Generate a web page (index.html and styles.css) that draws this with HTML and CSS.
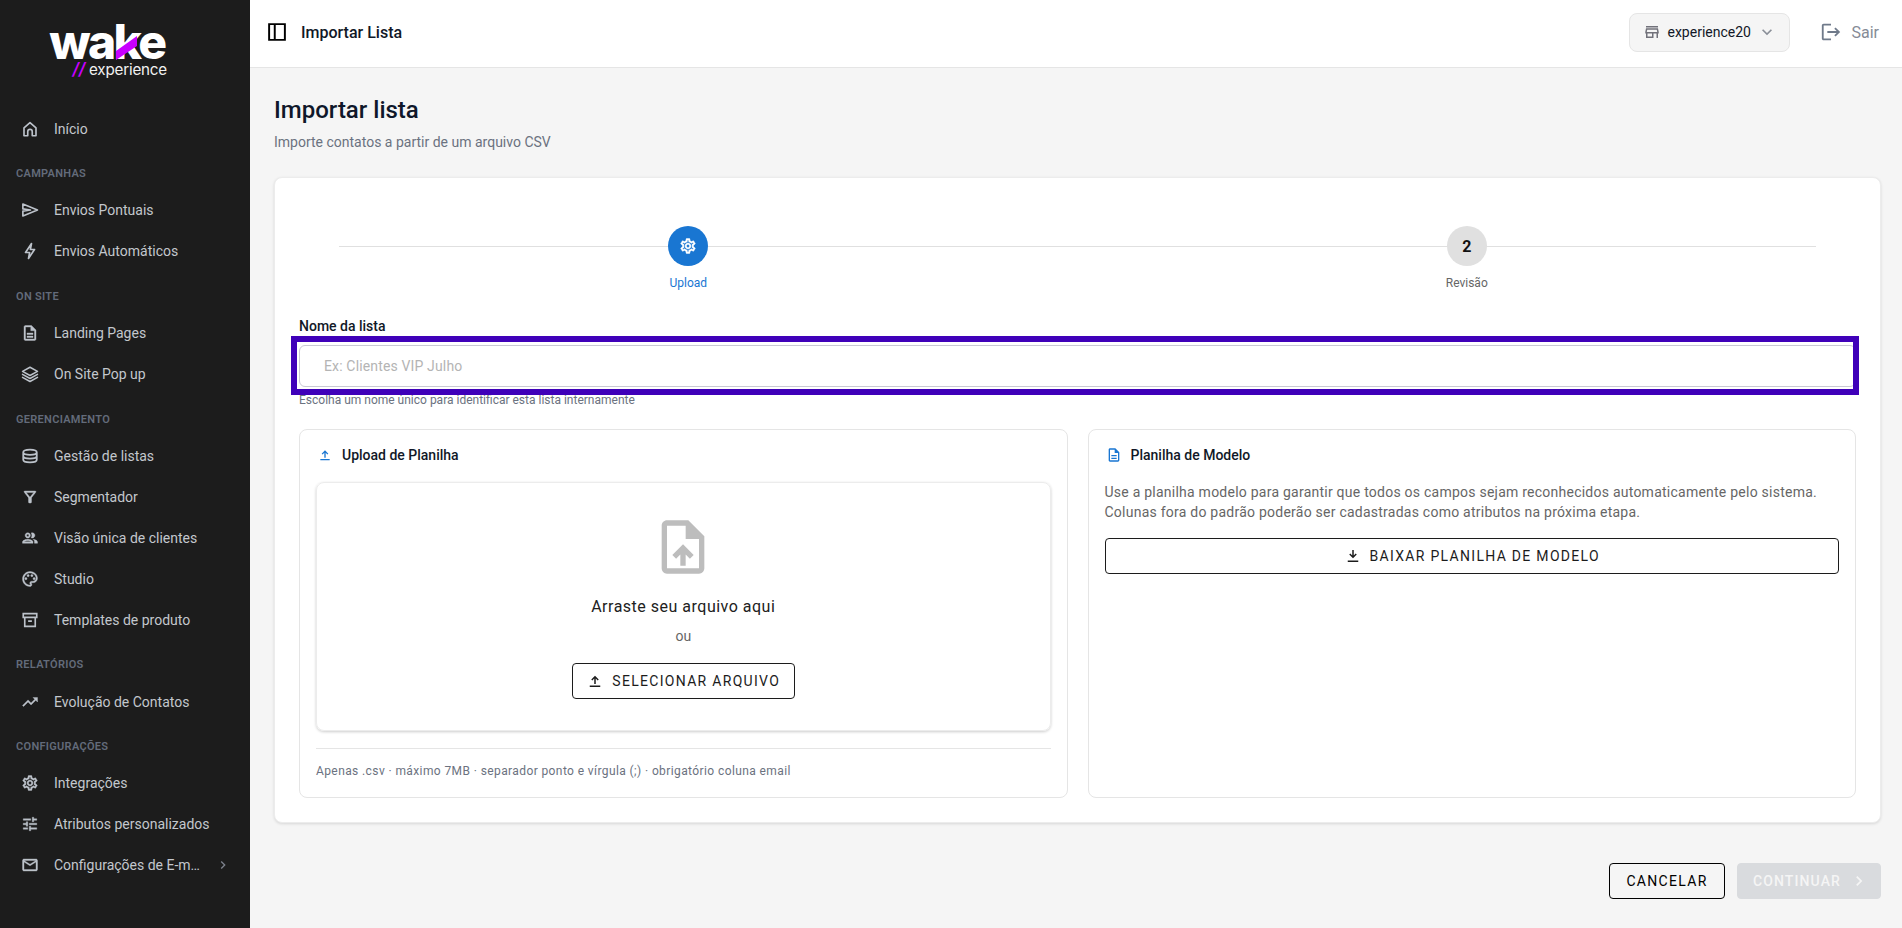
FILE: index.html
```html
<!DOCTYPE html>
<html lang="pt-BR">
<head>
    <meta charset="UTF-8">
    <meta name="viewport" content="width=device-width, initial-scale=1.0">
    <title>Importar Lista</title>
    <link rel="stylesheet" href="styles.css">
</head>
<body>

    <!-- Icon sprite -->
    <svg class="sprite" xmlns="http://www.w3.org/2000/svg">
        <symbol id="i-home" viewBox="0 0 24 24"><path fill="none" stroke="currentColor" stroke-width="2.2" stroke-linejoin="round" d="M4 10.5 12 3.5l8 7V21h-5v-5.500a3 3 0 0 0-6 0V21H4z"/></symbol>
        <symbol id="i-send" viewBox="0 0 24 24"><path fill="none" stroke="currentColor" stroke-width="2.200" stroke-linejoin="round" d="M2.500 4 22 12 2.500 20v-6.500l10-1.500-10-1.500z"/></symbol>
        <symbol id="i-bolt" viewBox="0 0 24 24"><path fill="none" stroke="currentColor" stroke-width="2.200" stroke-linejoin="round" d="M14 2 6 14h5.500L10 22l8-12h-5.500z"/></symbol>
        <symbol id="i-doc" viewBox="0 0 24 24"><path d="M8 16h8v2H8zm0-4h8v2H8zm6-10H6c-1.100 0-2 .9-2 2v16c0 1.100.89 2 1.990 2H18c1.100 0 2-.9 2-2V8l-6-6zm4 18H6V4h7v5h5v11z"/></symbol>
        <symbol id="i-layers" viewBox="0 0 24 24"><path fill="none" stroke="currentColor" stroke-width="2" stroke-linejoin="round" stroke-linecap="round" d="M12 3l10 5.500-10 5.500L2 8.500zM2 12.500 12 18l10-5.500M2 16.500 12 22l10-5.500"/></symbol>
        <symbol id="i-db" viewBox="0 0 24 24"><path fill="none" stroke="currentColor" stroke-width="2.400" d="M3 7c0-2 4-3.500 9-3.500S21 5 21 7s-4 3.500-9 3.500S3 9 3 7zM3 7v10c0 2 4 3.500 9 3.500s9-1.500 9-3.500V7M3 12c0 2 4 3.500 9 3.500s9-1.500 9-3.500"/></symbol>
        <symbol id="i-filter" viewBox="0 0 24 24"><path d="M7 6h10l-5.010 6.300L7 6zm-2.750-.39C6.270 8.200 10 13 10 13v6c0 .55.45 1 1 1h2c.55 0 1-.45 1-1v-6s3.720-4.800 5.740-7.390c.51-.66.04-1.610-.79-1.610H5.040c-.83 0-1.300.95-.79 1.610z"/></symbol>
        <symbol id="i-people" viewBox="0 0 24 24"><path d="M9 13.750c-2.340 0-7 1.170-7 3.500V19h14v-1.750c0-2.330-4.660-3.500-7-3.500zM4.340 17c.84-.58 2.870-1.250 4.660-1.250s3.820.67 4.660 1.250H4.340zM9 12c1.930 0 3.500-1.570 3.500-3.500S10.930 5 9 5 5.500 6.570 5.500 8.500 7.070 12 9 12zm0-5c.83 0 1.500.67 1.500 1.500S9.830 10 9 10s-1.500-.67-1.500-1.500S8.170 7 9 7zm7.040 6.810c1.160.84 1.960 1.960 1.960 3.440V19h4v-1.750c0-2.020-3.500-3.170-5.960-3.440zM15 12c1.930 0 3.500-1.570 3.500-3.500S16.930 5 15 5c-.54 0-1.040.13-1.500.35.63.89 1 1.980 1 3.150s-.37 2.260-1 3.150c.46.22.96.35 1.500.35z"/></symbol>
        <symbol id="i-palette" viewBox="0 0 24 24"><path d="M12 22C6.490 22 2 17.510 2 12S6.490 2 12 2s10 4.040 10 9c0 3.310-2.690 6-6 6h-1.770c-.28 0-.5.22-.5.5 0 .12.05.23.13.33.41.47.64 1.060.64 1.670 0 1.380-1.120 2.500-2.500 2.500zm0-18c-4.410 0-8 3.590-8 8s3.590 8 8 8c.28 0 .5-.22.5-.5 0-.16-.08-.28-.14-.35-.41-.46-.63-1.050-.63-1.650 0-1.380 1.120-2.500 2.500-2.500H16c2.210 0 4-1.790 4-4 0-3.860-3.590-7-8-7z"/><circle cx="6.500" cy="11.500" r="1.500"/><circle cx="9.500" cy="7.500" r="1.500"/><circle cx="14.500" cy="7.500" r="1.500"/><circle cx="17.500" cy="11.500" r="1.500"/></symbol>
        <symbol id="i-archive" viewBox="0 0 24 24"><path fill="none" stroke="currentColor" stroke-width="2.200" d="M3 3.500h18v5H3zM5 8.500V20.500h14V8.500M9.500 13.500h5"/></symbol>
        <symbol id="i-trend" viewBox="0 0 24 24"><path d="M16 6l2.290 2.290-4.880 4.880-4-4L2 16.590 3.410 18l6-6 4 4 6.300-6.290L22 12V6z"/></symbol>
        <symbol id="i-gear" viewBox="0 0 24 24"><path d="M19.430 12.980c.04-.32.07-.64.07-.98 0-.34-.03-.66-.07-.98l2.110-1.650c.19-.15.24-.42.12-.64l-2-3.460c-.09-.16-.26-.25-.44-.25-.06 0-.12.01-.17.03l-2.490 1c-.52-.4-1.080-.73-1.690-.98l-.38-2.650C14.460 2.180 14.250 2 14 2h-4c-.25 0-.46.18-.49.42l-.38 2.650c-.61.25-1.170.59-1.690.98l-2.490-1c-.06-.02-.12-.03-.18-.03-.17 0-.34.09-.43.25l-2 3.460c-.13.22-.07.49.12.64l2.110 1.650c-.04.32-.07.65-.07.98 0 .33.03.66.07.98l-2.110 1.650c-.19.15-.24.42-.12.64l2 3.460c.09.16.26.25.44.25.06 0 .12-.01.17-.03l2.490-1c.52.4 1.080.73 1.690.98l.38 2.650c.03.24.24.42.49.42h4c.25 0 .46-.18.49-.42l.38-2.650c.61-.25 1.170-.59 1.690-.98l2.490 1c.06.02.12.03.18.03.17 0 .34-.09.43-.25l2-3.460c.12-.22.07-.49-.12-.64l-2.110-1.650zm-1.980-1.710c.04.31.05.52.05.73 0 .21-.02.43-.05.73l-.14 1.130.89.7 1.080.84-.7 1.210-1.270-.51-1.040-.42-.9.68c-.43.32-.84.56-1.250.73l-1.060.43-.16 1.130-.2 1.350h-1.400l-.19-1.350-.16-1.130-1.060-.43c-.43-.18-.83-.41-1.230-.71l-.91-.7-1.060.43-1.270.51-.7-1.210 1.080-.84.89-.7-.14-1.130c-.03-.31-.05-.54-.05-.74s.02-.43.05-.73l.14-1.130-.89-.7-1.080-.84.7-1.210 1.270.51 1.040.42.9-.68c.43-.32.84-.56 1.250-.73l1.060-.43.16-1.130.2-1.350h1.390l.19 1.350.16 1.130 1.060.43c.43.18.83.41 1.230.71l.91.7 1.060-.43 1.270-.51.7 1.210-1.070.85-.89.7.14 1.130zM12 8c-2.210 0-4 1.790-4 4s1.790 4 4 4 4-1.790 4-4-1.790-4-4-4zm0 6c-1.100 0-2-.9-2-2s.9-2 2-2 2 .9 2 2-.9 2-2 2z"/></symbol>
        <symbol id="i-tune" viewBox="0 0 24 24"><path d="M3 17v2h6v-2H3zM3 5v2h10V5H3zm10 16v-2h8v-2h-8v-2h-2v6h2zM7 9v2H3v2h4v2h2V9H7zm14 4v-2H11v2h10zm-6-4h2V7h4V5h-4V3h-2v6z"/></symbol>
        <symbol id="i-mail" viewBox="0 0 24 24"><path d="M22 6c0-1.100-.9-2-2-2H4c-1.100 0-2 .9-2 2v12c0 1.100.9 2 2 2h16c1.100 0 2-.9 2-2V6zm-2 0-8 5-8-5h16zm0 12H4V8l8 5 8-5v10z"/></symbol>
        <symbol id="i-chevron" viewBox="0 0 24 24"><path d="M10 6 8.590 7.410 13.170 12l-4.580 4.590L10 18l6-6z"/></symbol>
        <symbol id="i-expand" viewBox="0 0 24 24"><path d="M16.590 8.590 12 13.170 7.410 8.590 6 10l6 6 6-6z"/></symbol>
        <symbol id="i-logout" viewBox="0 0 24 24"><path d="M17 7l-1.410 1.410L18.170 11H8v2h10.170l-2.580 2.580L17 17l5-5zM4 5h8V3H4c-1.100 0-2 .9-2 2v14c0 1.100.9 2 2 2h8v-2H4V5z"/></symbol>
        <symbol id="i-store" viewBox="0 0 24 24"><path d="M18.360 9l.6 3H5.040l.6-3h12.720M20 4H4v2h16V4zm0 3H4l-1 5v2h1v6h10v-6h4v6h2v-6h1v-2l-1-5zM6 18v-4h6v4H6z"/></symbol>
        <symbol id="i-panel" viewBox="0 0 24 24"><path fill="none" stroke="currentColor" stroke-width="2.600" d="M1.500 1.500h21v21h-21zM9 1.500v21"/></symbol>
        <symbol id="i-upload" viewBox="0 0 24 24"><path d="M5 18h14v2H5zM11 16V8.800L8.400 11.400 7 10l5-5 5 5-1.400 1.400L13 8.800V16z"/></symbol>
        <symbol id="i-download" viewBox="0 0 24 24"><path d="M5 18h14v2H5zM13 4v7.200l2.600-2.600L17 10l-5 5-5-5 1.400-1.400L11 11.200V4z"/></symbol>
        <symbol id="i-file-up" viewBox="0 0 24 24"><path d="M14 2H6c-1.100 0-1.990.9-1.990 2L4 20c0 1.100.89 2 1.990 2H18c1.100 0 2-.9 2-2V8l-6-6zm4 18H6V4h7v5h5v11zM8 15.010l1.410 1.410L11 14.840V19h2v-4.160l1.590 1.590L16 15.010 12.010 11z"/></symbol>
    </svg>

    <div class="app">

        <!-- Sidebar -->
        <aside class="sidebar">
            <div class="logo">
                <div class="logo-word">wake<svg class="logo-slash" viewBox="0 0 22 24"><polygon points="0,15 21,0 21,10 0,24"/></svg></div>
                <div class="logo-sub"><span class="logo-bars">//</span> experience</div>
            </div>
            <nav class="nav">
                <a class="nav-item"><svg class="nav-icon"><use href="#i-home"/></svg>Início</a>
                <div class="nav-title">CAMPANHAS</div>
                <a class="nav-item"><svg class="nav-icon"><use href="#i-send"/></svg>Envios Pontuais</a>
                <a class="nav-item"><svg class="nav-icon"><use href="#i-bolt"/></svg>Envios Automáticos</a>
                <div class="nav-title">ON SITE</div>
                <a class="nav-item"><svg class="nav-icon"><use href="#i-doc"/></svg>Landing Pages</a>
                <a class="nav-item"><svg class="nav-icon"><use href="#i-layers"/></svg>On Site Pop up</a>
                <div class="nav-title">GERENCIAMENTO</div>
                <a class="nav-item"><svg class="nav-icon"><use href="#i-db"/></svg>Gestão de listas</a>
                <a class="nav-item"><svg class="nav-icon"><use href="#i-filter"/></svg>Segmentador</a>
                <a class="nav-item"><svg class="nav-icon"><use href="#i-people"/></svg>Visão única de clientes</a>
                <a class="nav-item"><svg class="nav-icon"><use href="#i-palette"/></svg>Studio</a>
                <a class="nav-item"><svg class="nav-icon"><use href="#i-archive"/></svg>Templates de produto</a>
                <div class="nav-title">RELATÓRIOS</div>
                <a class="nav-item"><svg class="nav-icon"><use href="#i-trend"/></svg>Evolução de Contatos</a>
                <div class="nav-title">CONFIGURAÇÕES</div>
                <a class="nav-item"><svg class="nav-icon"><use href="#i-gear"/></svg>Integrações</a>
                <a class="nav-item"><svg class="nav-icon"><use href="#i-tune"/></svg>Atributos personalizados</a>
                <a class="nav-item"><svg class="nav-icon"><use href="#i-mail"/></svg><span class="nav-clip">Configurações de E-mail</span><svg class="nav-more"><use href="#i-chevron"/></svg></a>
            </nav>
        </aside>

        <div class="content">

            <!-- Top bar -->
            <header class="topbar">
                <svg class="panel-icon"><use href="#i-panel"/></svg>
                <span class="topbar-title">Importar Lista</span>
                <div class="store-select">
                    <svg class="store-icon"><use href="#i-store"/></svg>
                    <span class="store-name">experience20</span>
                    <svg class="store-arrow"><use href="#i-expand"/></svg>
                </div>
                <a class="logout"><svg class="logout-icon"><use href="#i-logout"/></svg>Sair</a>
            </header>

            <main class="main">
                <h1>Importar lista</h1>
                <p class="subtitle">Importe contatos a partir de um arquivo CSV</p>

                <section class="card">

                    <!-- Stepper -->
                    <div class="stepper">
                        <div class="stepper-line"></div>
                        <div class="step step-active">
                            <div class="step-circle"><svg class="step-icon"><use href="#i-gear"/></svg></div>
                            <div class="step-label">Upload</div>
                        </div>
                        <div class="step">
                            <div class="step-circle">2</div>
                            <div class="step-label">Revisão</div>
                        </div>
                    </div>

                    <label class="field-label" for="list-name">Nome da lista</label>
                    <div class="field-box">
                        <input id="list-name" type="text" placeholder="Ex: Clientes VIP Julho">
                        <div class="highlight"></div>
                    </div>
                    <p class="field-help">Escolha um nome único para identificar esta lista internamente</p>

                    <div class="panels">
                        <div class="panel">
                            <h2 class="panel-title"><svg class="panel-title-icon"><use href="#i-upload"/></svg>Upload de Planilha</h2>
                            <div class="dropzone">
                                <svg class="drop-icon"><use href="#i-file-up"/></svg>
                                <div class="drop-text">Arraste seu arquivo aqui</div>
                                <div class="drop-or">ou</div>
                                <button class="btn btn-select" type="button"><svg class="btn-icon"><use href="#i-upload"/></svg>SELECIONAR ARQUIVO</button>
                            </div>
                            <div class="panel-foot">Apenas .csv · máximo 7MB · separador ponto e vírgula (;) · obrigatório coluna email</div>
                        </div>
                        <div class="panel">
                            <h2 class="panel-title"><svg class="panel-title-icon"><use href="#i-doc"/></svg>Planilha de Modelo</h2>
                            <p class="panel-text">Use a planilha modelo para garantir que todos os campos sejam reconhecidos automaticamente pelo sistema.<br>Colunas fora do padrão poderão ser cadastradas como atributos na próxima etapa.</p>
                            <button class="btn btn-wide" type="button"><svg class="btn-icon"><use href="#i-download"/></svg>BAIXAR PLANILHA DE MODELO</button>
                        </div>
                    </div>
                </section>

                <div class="actions">
                    <button class="btn btn-cancel" type="button">CANCELAR</button>
                    <button class="btn btn-next" type="button" disabled>CONTINUAR<svg class="btn-next-icon"><use href="#i-chevron"/></svg></button>
                </div>
            </main>
        </div>
    </div>

</body>
</html>
```

FILE: styles.css
```css
* {
    box-sizing: border-box;
}

body {
    font-family: 'Roboto', 'Liberation Sans', sans-serif;
    margin: 0;
    padding: 0;
    background-color: #f5f5f5;
    color: #111827;
    overflow: hidden;
}

h1, h2, p {
    margin: 0;
}

svg {
    fill: currentColor;
    flex-shrink: 0;
}

.sprite {
    display: none;
}

.app {
    display: flex;
    height: 100vh;
}

/* Sidebar */

.sidebar {
    width: 250px;
    flex-shrink: 0;
    background-color: #1c1c1c;
    color: #c3c7cd;
}

.logo {
    height: 108px;
    padding-top: 21px;
    display: flex;
    flex-direction: column;
    align-items: flex-end;
    width: 167px;
}

.logo-word {
    position: relative;
    margin-right: 2.4px;
    font-family: 'Inter', sans-serif;
    font-weight: 800;
    font-size: 48px;
    line-height: 42px;
    letter-spacing: -2.6px;
    color: #fff;
}

.logo-slash {
    position: absolute;
    left: 67px;
    top: 15px;
    width: 22px;
    height: 24px;
    fill: #c800ff;
}

.logo-sub {
    margin-top: -1px;
    font-family: 'Inter', sans-serif;
    font-size: 15.2px;
    line-height: 14px;
    letter-spacing: -0.2px;
    color: #f1f1f1;
}

.logo-bars {
    color: #c800ff;
    font-style: italic;
    font-weight: 600;
    font-size: 17px;
}

.nav-item {
    display: flex;
    align-items: center;
    height: 41px;
    padding-left: 21px;
    font-size: 14px;
}

.nav-icon {
    width: 18px;
    height: 18px;
    margin-right: 15px;
    color: #bcc2ca;
    stroke: currentColor;
    stroke-width: 0.5;
}

.nav-clip {
    width: 147px;
    white-space: nowrap;
    overflow: hidden;
    text-overflow: ellipsis;
}

.nav-more {
    width: 16px;
    height: 16px;
    margin-left: 14px;
    color: #7c828c;
}

.nav-title {
    height: 40.8px;
    padding: 16px 0 0 16px;
    font-size: 11px;
    line-height: 17px;
    font-weight: 600;
    letter-spacing: 0.3px;
    color: #636b7a;
}

/* Top bar */

.content {
    flex: 1;
    display: flex;
    flex-direction: column;
    min-width: 0;
}

.topbar {
    display: flex;
    align-items: center;
    height: 68px;
    padding: 0 23px 3px 18px;
    background-color: #fff;
    border-bottom: 1px solid #e5e5e5;
}

.panel-icon {
    width: 18px;
    height: 18px;
    color: #000;
    margin-right: 15px;
}

.topbar-title {
    font-size: 16px;
    font-weight: 500;
}

.store-select {
    display: flex;
    align-items: center;
    width: 161px;
    height: 39px;
    margin-left: auto;
    padding-left: 13px;
    background-color: #f5f5f5;
    border: 1px solid #e5e5e5;
    border-radius: 8px;
    font-size: 14px;
}

.store-icon {
    width: 18px;
    height: 18px;
    color: #71717a;
    margin-right: 6px;
}

.store-arrow {
    width: 20px;
    height: 20px;
    color: #8a8f98;
    margin-left: 6px;
}

.logout {
    display: flex;
    align-items: center;
    margin-left: 30px;
    font-size: 16px;
    color: #858b96;
}

.logout-icon {
    width: 22px;
    height: 22px;
    margin-right: 9px;
    color: #6f7a8a;
}

/* Main */

.main {
    flex: 1;
    padding: 25px 21px 0 24px;
    min-height: 0;
}

h1 {
    font-size: 24px;
    line-height: 34px;
    font-weight: 500;
    color: #0f172a;
}

.subtitle {
    margin-top: 5px;
    font-size: 14px;
    line-height: 20px;
    color: #6b7280;
}

.card {
    margin-top: 25px;
    padding: 48px 24px 24px;
    background-color: #fff;
    border: 1px solid #ececec;
    border-radius: 8px;
    box-shadow: 0 1px 3px rgba(0, 0, 0, 0.12);
}

.stepper {
    position: relative;
    display: grid;
    grid-template-columns: 1fr 1fr;
}

.stepper-line {
    position: absolute;
    left: 40px;
    right: 40px;
    top: 20px;
    height: 1px;
    background-color: #e0e0e0;
}

.step {
    position: relative;
    display: flex;
    flex-direction: column;
    align-items: center;
}

.step-circle {
    display: flex;
    align-items: center;
    justify-content: center;
    width: 40px;
    height: 40px;
    border-radius: 50%;
    background-color: #e0e0e0;
    font-size: 16px;
    font-weight: 700;
    color: #111;
}

.step-active .step-circle {
    background-color: #1976d2;
    color: #fff;
}

.step-icon {
    width: 18px;
    height: 18px;
    stroke: currentColor;
    stroke-width: 0.6;
}

.step-label {
    margin-top: 7px;
    font-size: 12px;
    line-height: 20px;
    color: #666;
}

.step-active .step-label {
    color: #1976d2;
}

.field-label {
    display: block;
    margin-top: 23px;
    font-size: 14px;
    line-height: 20px;
    font-weight: 500;
}

.field-box {
    position: relative;
    margin-top: 9px;
}

input[type="text"] {
    display: block;
    width: 100%;
    height: 42px;
    padding: 0 24px;
    border: 1px solid #c9c9d4;
    border-radius: 6px;
    font-family: inherit;
    font-size: 14px;
    letter-spacing: 0.15px;
    background-color: #fff;
}

input::placeholder {
    color: #b4b4b4;
    opacity: 1;
}

.highlight {
    position: absolute;
    top: -9px;
    bottom: -8px;
    left: -8px;
    right: -3px;
    border: 6px solid #3f00b9;
    pointer-events: none;
}

.field-help {
    margin-top: 5px;
    font-size: 12px;
    line-height: 16px;
    color: #6b7280;
}

.panels {
    display: grid;
    grid-template-columns: 1fr 1fr;
    gap: 20px;
    margin-top: 21px;
}

.panel {
    padding: 15px 16px 18px;
    border: 1px solid #e5e5e5;
    border-radius: 8px;
}

.panel-title {
    display: flex;
    align-items: center;
    font-size: 14px;
    line-height: 20px;
    font-weight: 500;
}

.panel-title-icon {
    width: 16px;
    height: 16px;
    margin: 0 9px 0 1px;
    color: #1976d2;
}

.dropzone {
    display: flex;
    flex-direction: column;
    align-items: center;
    height: 249px;
    margin-top: 17px;
    padding-top: 32px;
    border: 1px solid #ececec;
    border-radius: 8px;
    box-shadow: 0 1px 3px rgba(0, 0, 0, 0.2);
}

.drop-icon {
    width: 64px;
    height: 64px;
    color: #bdbdbd;
}

.drop-text {
    margin-top: 16px;
    font-size: 16px;
    line-height: 24px;
    letter-spacing: 0.5px;
    color: #212121;
}

.drop-or {
    margin-top: 7px;
    font-size: 14px;
    line-height: 20px;
    color: #666;
}

.panel-foot {
    margin-top: 17px;
    padding-top: 14px;
    border-top: 1px solid #e5e5e5;
    font-size: 12px;
    line-height: 16px;
    letter-spacing: 0.4px;
    color: #6b7280;
}

.panel-text {
    margin-top: 17px;
    font-size: 14px;
    line-height: 20px;
    letter-spacing: 0.24px;
    color: #666;
}

/* Buttons */

.btn {
    display: inline-flex;
    align-items: center;
    justify-content: center;
    height: 36px;
    padding: 0;
    background-color: transparent;
    border: 1px solid #1c1c1c;
    border-radius: 4px;
    font-family: inherit;
    font-size: 14px;
    font-weight: 400;
    letter-spacing: 1.3px;
    color: #1c1c1c;
}

.btn-icon {
    width: 18px;
    height: 18px;
    margin-right: 8px;
}

.btn-select {
    width: 223px;
    margin-top: 17px;
}

.btn-wide {
    display: flex;
    width: 100%;
    margin-top: 16px;
}

.actions {
    display: flex;
    justify-content: flex-end;
    gap: 12px;
    margin-top: 40px;
}

.btn-cancel {
    width: 116px;
    color: #000;
    border-color: #000;
}

.btn-next {
    width: 144px;
    padding-left: 4px;
    background-color: #d9dbde;
    border-color: #d9dbde;
    color: #f5f5f5;
    font-weight: 500;
    letter-spacing: 1.1px;
}

.btn-next-icon {
    width: 20px;
    height: 20px;
    margin-left: 8px;
}
```
